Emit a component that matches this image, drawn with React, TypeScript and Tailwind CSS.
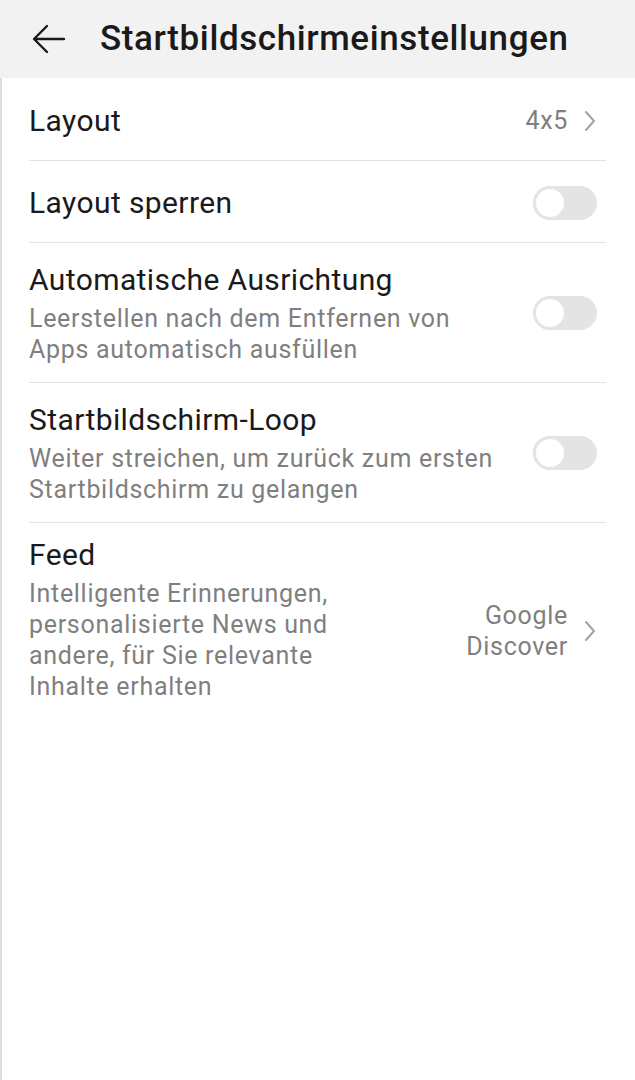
function Chevron() {
  return (
    <svg width="14" height="22" viewBox="0 0 14 22" className="ml-[15px] shrink-0">
      <path d="M3 2 L11 11 L3 20" fill="none" stroke="#a3a3a3" strokeWidth="2" strokeLinecap="round" strokeLinejoin="round" />
    </svg>
  )
}

function Toggle() {
  return (
    <div className="w-[64px] h-[34px] rounded-full bg-[#e4e4e4] flex items-center shrink-0">
      <div className="w-[34px] h-[34px] rounded-full bg-white border-[3px] border-[#e4e4e4]" />
    </div>
  )
}

function Row({ title, sub, right, className, rightClass = "" }: { title: string; sub?: string[]; right: React.ReactNode; className: string; rightClass?: string }) {
  return (
    <div className={`flex items-center justify-between ${className}`}>
      <div className="flex flex-col">
        <div className="text-[30px] leading-[40px] tracking-[0.4px] text-[#1a1a1a]">{title}</div>
        {sub && (
          <div className="text-[25px] leading-[31px] tracking-[0.7px] text-[#7f7f7f] mt-[3px]">
            {sub.map((s) => (
              <div key={s}>{s}</div>
            ))}
          </div>
        )}
      </div>
      <div className={`mr-[9px] ${rightClass}`}>{right}</div>
    </div>
  )
}

export default function App() {
  return (
    <div className="w-[635px] h-[1080px] bg-white flex flex-col" style={{ fontFamily: "Roboto, 'Noto Sans', sans-serif" }}>
      <header className="h-[78px] bg-[#f2f2f2] flex items-center shrink-0">
        <svg width="34" height="30" viewBox="0 0 34 30" className="ml-[32px]">
          <path d="M32 15 H3 M15 2 L2 15 L15 28" fill="none" stroke="#1a1a1a" strokeWidth="2.4" strokeLinecap="round" strokeLinejoin="round" />
        </svg>
        <h1 className="ml-[34px] text-[35px] font-medium text-[#1a1a1a] tracking-[0.6px]">Startbildschirmeinstellungen</h1>
      </header>
      <main className="flex-1 border-l-2 border-[#dedede] pl-[27px] pr-[29px]">
        <Row
          className="h-[83px] pt-[3px] border-b border-[#e3e3e3]"
          title="Layout"
          right={
            <div className="flex items-center text-[25px] tracking-[0.7px] text-[#7f7f7f]">
              4x5
              <Chevron />
            </div>
          }
        />
        <Row className="h-[82px] pt-[3px] border-b border-[#e3e3e3]" title="Layout sperren" right={<Toggle />} />
        <Row
          className="pt-[17px] pb-[17px] border-b border-[#e3e3e3]"
          title="Automatische Ausrichtung"
          sub={["Leerstellen nach dem Entfernen von", "Apps automatisch ausfüllen"]}
          right={<Toggle />}
        />
        <Row
          className="pt-[17px] pb-[17px] border-b border-[#e3e3e3]"
          title="Startbildschirm-Loop"
          sub={["Weiter streichen, um zurück zum ersten", "Startbildschirm zu gelangen"]}
          right={<Toggle />}
        />
        <Row
          className="pt-[12px] pb-[24px]"
          rightClass="mt-[24px]"
          title="Feed"
          sub={["Intelligente Erinnerungen,", "personalisierte News und", "andere, für Sie relevante", "Inhalte erhalten"]}
          right={
            <div className="flex items-center text-[25px] leading-[31px] tracking-[0.7px] text-[#7f7f7f]">
              <div className="text-right">
                <div>Google</div>
                <div>Discover</div>
              </div>
              <Chevron />
            </div>
          }
        />
      </main>
    </div>
  )
}
